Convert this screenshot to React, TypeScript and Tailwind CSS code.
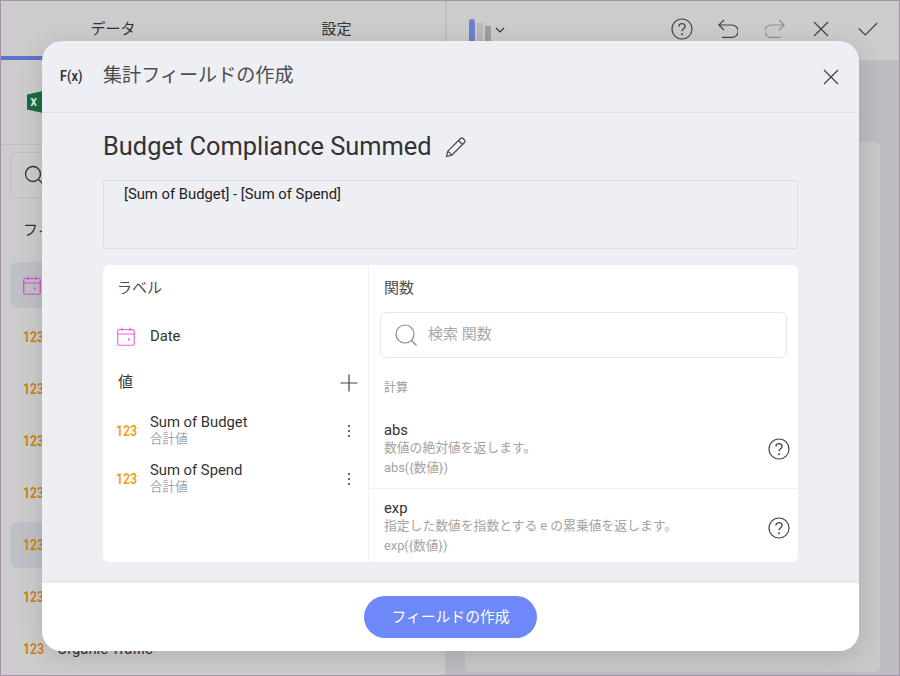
import React from "react";

const font = { fontFamily: '"Roboto","Noto Sans CJK JP",sans-serif' };

function Help({ size = 22, color = "#4a4a4a" }: { size?: number; color?: string }) {
  return (
    <svg width={size} height={size} viewBox="0 0 22 22" fill="none" className="shrink-0">
      <circle cx="11" cy="11" r="10" stroke={color} strokeWidth="1.2" />
      <path d="M7.9 8.6c0-1.9 1.4-3 3.1-3s3.1 1.1 3.1 2.8c0 2.4-3.1 2.4-3.1 4.8" stroke={color} strokeWidth="1.4" />
      <circle cx="11" cy="16.2" r="1" fill={color} />
    </svg>
  );
}

function Calendar({ color, size = 18 }: { color: string; size?: number }) {
  return (
    <svg width={size} height={size + 1} viewBox="0 0 18 19" fill="none" className="shrink-0">
      <rect x="0.75" y="2.5" width="16.5" height="15.75" rx="1.5" stroke={color} strokeWidth="1.2" />
      <path d="M0.75 7h16.5M5 0.5v3.5M13 0.5v3.5" stroke={color} strokeWidth="1.2" />
      <rect x="10.8" y="11.5" width="2" height="2" fill={color} />
    </svg>
  );
}

function X({ size = 16, color = "#444" }: { size?: number; color?: string }) {
  return (
    <svg width={size} height={size} viewBox="0 0 16 16" fill="none" className="shrink-0">
      <path d="M1 1l14 14M15 1L1 15" stroke={color} strokeWidth="1.3" />
    </svg>
  );
}

function Dots() {
  return (
    <svg width="4" height="14" viewBox="0 0 4 14" className="shrink-0">
      <circle cx="2" cy="2" r="1.1" fill="#444" />
      <circle cx="2" cy="7" r="1.1" fill="#444" />
      <circle cx="2" cy="12" r="1.1" fill="#444" />
    </svg>
  );
}

function BgRow({ active, cal, label }: { active?: boolean; cal?: boolean; label?: string }) {
  return (
    <div className={`h-[46px] mb-[6px] shrink-0 rounded-lg flex items-center pl-[13px] ${active ? "bg-[#bfc0c6]" : ""}`}>
      {cal ? (
        <Calendar color="#d04ed0" />
      ) : (
        <span className="inline-block text-[14px] font-semibold text-[#c9800f] w-[34px] origin-left scale-x-[0.88]">123</span>
      )}
      {label && <span className="text-[14.8px] text-[#333]">{label}</span>}
    </div>
  );
}

function ValueRow({ name }: { name: string }) {
  return (
    <div className="h-[48px] shrink-0 flex items-center pl-[13px] pr-[17px]">
      <span className="inline-block text-[14px] font-semibold text-[#fb9a12] w-[34px] origin-left scale-x-[0.88]">123</span>
      <div className="flex-1 flex flex-col pb-[2px]">
        <span className="text-[14.8px] leading-[18px] text-[#333]">{name}</span>
        <span className="text-[12.6px] leading-[16px] text-[#a3a3a3]">合計値</span>
      </div>
      <Dots />
    </div>
  );
}

function FnRow({ name, desc, sig, border }: { name: string; desc: string; sig: string; border?: boolean }) {
  return (
    <div className={`flex items-center pl-[15px] pr-[8px] pb-[1px] h-[78px] ${border ? "border-b border-[#eef0f5]" : ""}`}>
      <div className="flex-1 flex flex-col">
        <span className="text-[14.8px] leading-[18px] text-[#333]">{name}</span>
        <span className="text-[12.8px] leading-[18px] text-[#a3a3a3]">{desc}</span>
        <span className="text-[12.8px] leading-[20px] pt-[1px] text-[#a3a3a3]">{sig}</span>
      </div>
      <Help />
    </div>
  );
}

export default function App() {
  return (
    <div style={font} className="relative w-[900px] h-[676px] overflow-hidden border border-[#a193a3] bg-[#bdbdc1]">
      {/* Underlying page */}
      <div className="flex h-full">
        <div className="w-[444px] bg-[#cccccc] flex flex-col overflow-hidden">
          <div className="h-[59px] shrink-0 flex relative">
            <div className="w-[224px] flex items-center justify-center text-[15px] text-[#333] pt-[2px] border-b-[4px] border-[#5f72cf]">データ</div>
            <div className="flex-1 pl-[3px] flex items-center justify-center text-[15px] text-[#333] pt-[2px] border-b-[4px] border-[#cccccc]">設定</div>
          </div>
          <div className="h-[85px] shrink-0 border-b border-[#bdbdbd] flex items-center pl-[26px]">
            <svg width="16" height="22" viewBox="0 0 16 22">
              <polygon points="0,3.5 16,0 16,22 0,18.5" fill="#1d6b40" />
              <text x="3.5" y="15" fontSize="10" fontWeight="700" fill="#e8f1ec">X</text>
            </svg>
          </div>
          <div className="mx-[9px] mt-[7px] h-[46px] shrink-0 border border-[#bdbdbd] rounded-md flex items-center pl-[13px]">
            <svg width="20" height="20" viewBox="0 0 20 20" fill="none">
              <circle cx="9" cy="9" r="7.5" stroke="#333" strokeWidth="1.3" />
              <path d="M14.5 14.5l4 4" stroke="#333" strokeWidth="1.3" />
            </svg>
          </div>
          <div className="pl-[22px] mt-[21px] h-[22px] shrink-0 text-[15px] text-[#333]">フィールド</div>
          <div className="mx-[9px] mt-[21px] shrink-0">
            <BgRow active cal />
            <BgRow />
            <BgRow />
            <BgRow />
            <BgRow />
            <BgRow active />
            <BgRow />
            <BgRow label="Organic Traffic" />
          </div>
        </div>
        <div className="flex-1 flex flex-col">
          <div className="h-[59px] shrink-0 bg-[#cccccc] border-l-[2px] border-[#bfbfbf] flex items-center pl-[22px] pr-[8px]">
            <div className="self-start flex items-end gap-[2px] h-[41px]">
              <div className="w-[6px] h-[23px] rounded-t-sm bg-[#6f80cf]" />
              <div className="w-[6px] h-[19px] bg-[#b9b9b9]" />
              <div className="w-[6px] h-[16px] bg-[#9e9e9e]" />
            </div>
            <svg width="10" height="6" viewBox="0 0 10 6" fill="none" className="ml-[4px] mb-[2px]">
              <path d="M1 1l4 4 4-4" stroke="#333" strokeWidth="1.2" />
            </svg>
            <div className="ml-auto flex items-center pb-[3px]">
              <div className="w-[46.5px] flex justify-center"><Help /></div>
              <div className="w-[46.5px] flex justify-center">
                <svg width="20" height="20" viewBox="0 0 20 20" fill="none">
                  <path d="M6 1L0.8 6 6 11M1 6h13a5.7 5.7 0 0 1 0 12.4H4" stroke="#444" strokeWidth="1.2" />
                </svg>
              </div>
              <div className="w-[46.5px] flex justify-center">
                <svg width="20" height="20" viewBox="0 0 20 20" fill="none">
                  <path d="M14 1l5.2 5L14 11M19 6H6a5.7 5.7 0 0 0 0 12.4h10" stroke="#8f8f8f" strokeWidth="1.2" />
                </svg>
              </div>
              <div className="w-[46.5px] flex justify-center"><X size={16} /></div>
              <div className="w-[46.5px] flex justify-center">
                <svg width="20" height="14" viewBox="0 0 20 14" fill="none">
                  <path d="M0.8 6.5l6.5 6.5L19.2 1" stroke="#444" strokeWidth="1.2" />
                </svg>
              </div>
            </div>
          </div>
          <div className="flex-1 pt-[82px] pl-[20px] pr-[19px] pb-[3px]">
            <div className="h-full rounded-md bg-[#c8c8c8]" />
          </div>
        </div>
      </div>

      {/* Modal */}
      <div className="absolute left-[41px] top-[40px] w-[817px] h-[610px] rounded-[20px] overflow-hidden bg-[#eeeff4] flex flex-col shadow-[0_4px_24px_rgba(0,0,0,0.14)]">
        <div className="h-[72px] shrink-0 border-b border-[#dfe0e5] flex items-center pl-[18px] pr-[20px]">
          <span className="inline-block text-[15px] font-semibold text-[#333] w-[43px] origin-left scale-x-[0.85]">F(x)</span>
          <span className="text-[19.1px] text-[#4d4d4d]">集計フィールドの作成</span>
          <div className="ml-auto"><X size={16} /></div>
        </div>
        <div className="flex-1 pl-[61px] pr-[61px] flex flex-col min-h-0">
          <div className="h-[67px] flex items-center gap-[13px] shrink-0">
            <span className="text-[25.4px] text-[#333]">Budget Compliance Summed</span>
            <svg width="22" height="22" viewBox="0 0 22 22" fill="none">
              <path d="M1.5 20.5l1.3-5.3L15.5 2.5a1.8 1.8 0 0 1 2.5 0l1.5 1.5a1.8 1.8 0 0 1 0 2.5L6.8 19.2zM13.5 4.5l4 4M2.8 15.2l4 4" stroke="#444" strokeWidth="1.2" />
            </svg>
          </div>
          <div className="h-[69px] shrink-0 border border-[#dcdde2] rounded-[2px] pl-[20px] pt-[4px] text-[14.8px] leading-[18px] text-[#222]">
            [Sum of Budget] - [Sum of Spend]
          </div>
          <div className="mt-[16px] flex h-[297px] bg-white rounded-md overflow-hidden">
            <div className="w-[266px] shrink-0 border-r border-[#eef0f5] flex flex-col">
              <div className="h-[47px] shrink-0 pl-[14px] flex items-center text-[15px] text-[#4d4d4d]">ラベル</div>
              <div className="h-[48px] shrink-0 pl-[14px] flex items-center gap-[15px] text-[14.8px] text-[#333]">
                <Calendar color="#ee5fe6" />
                Date
              </div>
              <div className="h-[47px] shrink-0 pl-[15px] pr-[10px] pb-[2px] flex items-center justify-between text-[15px] text-[#333]">
                値
                <svg width="18" height="18" viewBox="0 0 18 18" fill="none">
                  <path d="M9 0.5v17M0.5 9h17" stroke="#444" strokeWidth="1.2" />
                </svg>
              </div>
              <ValueRow name="Sum of Budget" />
              <ValueRow name="Sum of Spend" />
            </div>
            <div className="flex-1 flex flex-col">
              <div className="h-[47px] shrink-0 pl-[15px] flex items-center text-[15px] text-[#4d4d4d]">関数</div>
              <div className="mx-[11px] h-[46px] shrink-0 border border-[#e6e7eb] rounded-md flex items-center pl-[14px] gap-[11px]">
                <svg width="22" height="22" viewBox="0 0 22 22" fill="none">
                  <circle cx="10" cy="10" r="9" stroke="#8a8a8a" strokeWidth="1.2" />
                  <path d="M16.5 16.5l5 5" stroke="#8a8a8a" strokeWidth="1.2" />
                </svg>
                <span className="text-[15px] text-[#a8a8a8] pb-[2px]">検索 関数</span>
              </div>
              <div className="pl-[15px] h-[20px] mt-[20px] shrink-0 text-[12px] leading-[20px] text-[#9b9b9b]">計算</div>
              <div className="mt-[13px]">
                <FnRow border name="abs" desc="数値の絶対値を返します。" sig="abs({数値})" />
                <FnRow name="exp" desc="指定した数値を指数とする e の累乗値を返します。" sig="exp({数値})" />
              </div>
            </div>
          </div>
        </div>
        <div className="h-[68px] shrink-0 bg-white flex items-center justify-center shadow-[0_-2px_6px_rgba(0,0,0,0.04)]">
          <div className="w-[173px] h-[42px] rounded-full bg-[#6c88f9] text-white text-[14.8px] flex items-center justify-center">フィールドの作成</div>
        </div>
      </div>
    </div>
  );
}
